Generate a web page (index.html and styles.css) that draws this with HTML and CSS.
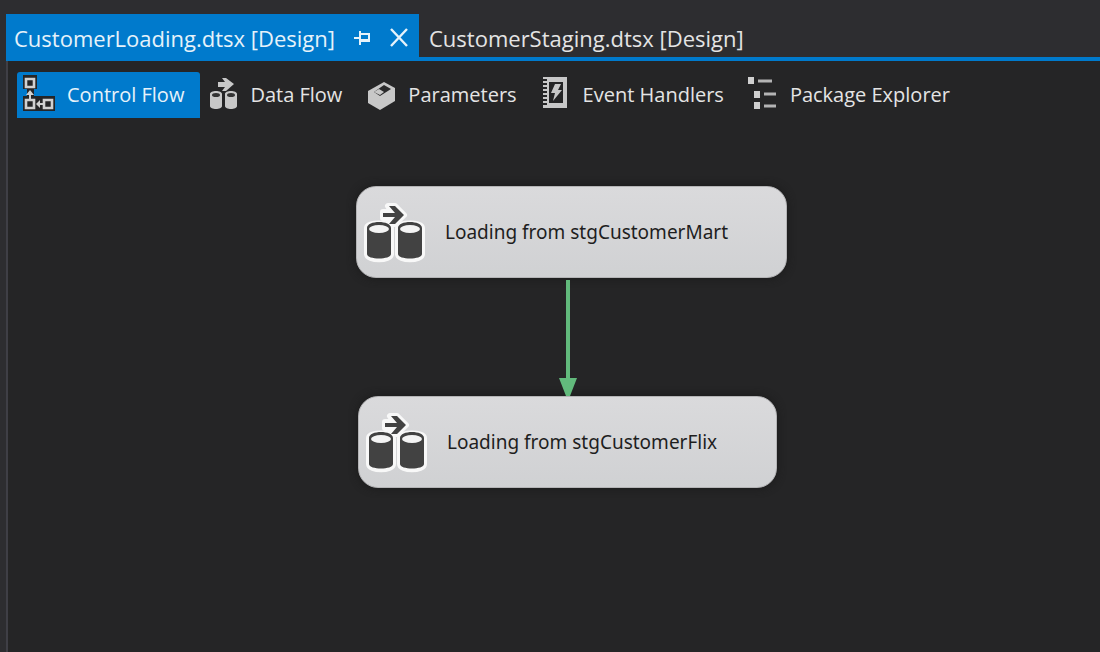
FILE: index.html
```html
<!DOCTYPE html>
<html lang="en">
<head>
<meta charset="utf-8">
<title>CustomerLoading.dtsx [Design]</title>
<link rel="stylesheet" href="styles.css">
</head>
<body>
<svg class="defs" aria-hidden="true">
  <symbol id="task" viewBox="0 0 60 60" overflow="visible">
    <g class="task-halo">
      <path d="M18 10h10l-5-6h7l9 9-9 9h-7l5-6H18z"/>
      <path d="M2 26c0-6 24-6 24 0v26c0 7-24 7-24 0zM33 26c0-6 24-6 24 0v26c0 7-24 7-24 0z"/>
    </g>
    <path class="task-ink" d="M18 11h12l-6-7h6l9 9-9 9h-6l6-7H18z"/>
    <path class="task-ink" d="M2 26c0-8 24-8 24 0v26c0 6-24 6-24 0zM33 26c0-8 24-8 24 0v26c0 6-24 6-24 0z"/>
    <ellipse class="task-top" cx="14" cy="27" rx="10" ry="4"/>
    <ellipse class="task-top" cx="45" cy="27" rx="10" ry="4"/>
  </symbol>
</svg>
<header class="tabs">
  <div class="tab tab-active">
    <button class="tab-label" type="button">CustomerLoading.dtsx [Design]</button>
    <button class="tab-tool" type="button" aria-label="Pin">
      <svg width="18" height="18" viewBox="0 0 18 18"><path d="M1 9h6M7 2v14M7 5h9v7H7" fill="none" stroke="currentColor" stroke-width="2"/><path d="M7 10h10v3H7z" fill="currentColor"/></svg>
    </button>
    <button class="tab-tool" type="button" aria-label="Close">
      <svg width="20" height="20" viewBox="0 0 20 20"><path d="M2 1l16 17M18 1L2 18" fill="none" stroke="currentColor" stroke-width="2.4"/></svg>
    </button>
  </div>
  <div class="tab">
    <button class="tab-label" type="button">CustomerStaging.dtsx [Design]</button>
  </div>
</header>
<main class="designer">
  <nav class="views">
    <button class="view view-active" type="button">
      <svg width="36" height="46" viewBox="0 0 36 46">
        <path d="M1 3h14v14h-3v7h25v15H1V24h4v-7H1z" fill="#252526"/>
        <path d="M4 7h8v8H4zM4 28h8v8H4zM22 28h8v8h-8z" fill="none" stroke="#d0d0d0" stroke-width="2.6"/>
        <path d="M8 18l4 5H9v4H7v-4H4zM14 32l4-4v3h3v2h-3v3z" fill="#d0d0d0"/>
        <path d="M33 24h4v15h-4z" fill="#007acc"/>
      </svg>
      <span>Control Flow</span>
    </button>
    <button class="view" type="button">
      <svg width="36" height="46" viewBox="0 0 36 46">
        <path d="M13 10h7l-3-4h4l8 6-8 7h-4l3-4h-7z" fill="#c8c8c8"/>
        <path d="M5 22c0-4 12-4 12 0v12c0 4-12 4-12 0zM20 22c0-4 12-4 12 0v12c0 4-12 4-12 0z" fill="#c8c8c8"/>
        <ellipse cx="11" cy="23" rx="4" ry="2" fill="#333"/><ellipse cx="26" cy="23" rx="4" ry="2" fill="#333"/>
      </svg>
      <span>Data Flow</span>
    </button>
    <button class="view" type="button">
      <svg width="36" height="46" viewBox="0 0 36 46">
        <path d="M21 10l11 6v13L17 38 5 31V19z" fill="#c8c8c8"/>
        <path d="M21 13l7 4-11 7-6-4z" fill="#2a2a2b"/>
        <path d="M11 20l5-3 5 3-4 3z" fill="#c8c8c8"/>
      </svg>
      <span>Parameters</span>
    </button>
    <button class="view" type="button">
      <svg width="36" height="46" viewBox="0 0 36 46">
        <path d="M5 5h24v31H5z" fill="#c8c8c8"/>
        <path d="M11 10h14v21H11z" fill="#252526"/>
        <path d="M5 8h4M5 12h4M5 16h4M5 20h4M5 24h4M5 28h4M5 32h4" stroke="#252526" stroke-width="2"/>
        <path d="M17 12h6l-3 6h4l-9 11 2-8h-4z" fill="#c8c8c8"/>
      </svg>
      <span>Event Handlers</span>
    </button>
    <button class="view" type="button">
      <svg width="36" height="46" viewBox="0 0 36 46">
        <path d="M3 5h6v7H3zM9 19h6v7H9zM9 30h6v7H9z" fill="#d0d0d0"/>
        <path d="M13 9h14M19 22h12M19 34h12" stroke="#b4b4b4" stroke-width="3"/>
      </svg>
      <span>Package Explorer</span>
    </button>
  </nav>
  <section class="canvas" aria-label="Control Flow">
    <div class="task task-mart">
      <svg class="task-icon" aria-hidden="true"><use href="#task"/></svg>
      <span>Loading from stgCustomerMart</span>
    </div>
    <svg class="link" width="18" height="118" viewBox="0 0 18 118" aria-hidden="true"><path d="M7 0h4v98h7l-7 18H7L0 98h7z" fill="#62ba7c"/></svg>
    <div class="task task-flix">
      <svg class="task-icon" aria-hidden="true"><use href="#task"/></svg>
      <span>Loading from stgCustomerFlix</span>
    </div>
  </section>
</main>
</body>
</html>
```
FILE: styles.css
```css
* {
  box-sizing: border-box;
}

body {
  margin: 0;
  min-height: 100vh;
  display: flex;
  flex-direction: column;
  padding: 14px 0 0 6px;
  background: #2d2d30;
  color: #e4e4e4;
  font-family: "Open Sans", "Noto Sans", sans-serif;
  font-size: 22px;
}

button {
  padding: 0;
  border: 0;
  background: none;
  color: inherit;
  font: inherit;
  white-space: nowrap;
}

svg {
  display: block;
  flex: none;
}

.defs {
  position: absolute;
  width: 0;
  height: 0;
}

.tabs {
  display: flex;
  border-bottom: 4px solid #007acc;
}

.tab {
  display: flex;
  align-items: center;
  gap: 18px;
  height: 43px;
  padding: 4px 10px 0 10px;
}

.tab-active {
  padding: 4px 10px 0 8px;
  background: #007acc;
  color: #e6f2fa;
}

.designer {
  flex: 1;
  display: flex;
  flex-direction: column;
  border-left: 2px solid #3f3f46;
  background: #252526;
}

.views {
  display: flex;
  padding: 11px 0 0 9px;
}

.view {
  display: flex;
  align-items: center;
  gap: 9px;
  height: 46px;
  padding: 0 16px 0 5px;
  font-size: 20px;
}

.view span {
  padding-bottom: 2px;
}

.view-active {
  border-radius: 3px 3px 0 0;
  background: #007acc;
  color: #e6f2fa;
}

.canvas {
  position: relative;
  flex: 1;
}

.task {
  position: absolute;
  display: flex;
  align-items: center;
  gap: 20px;
  height: 92px;
  padding: 0 8px;
  border: 1px solid #b4b4b6;
  border-radius: 20px;
  background: linear-gradient(#dadadc, #d0d1d3);
  box-shadow: 0 0 8px #1a1a1a;
  color: #1e1e1e;
  font-family: "Noto Sans", sans-serif;
  font-size: 19px;
  white-space: nowrap;
}

.task-mart {
  left: 348px;
  top: 68px;
  width: 431px;
}

.task-flix {
  left: 350px;
  top: 278px;
  width: 419px;
}

.link {
  position: absolute;
  z-index: 1;
  left: 551px;
  top: 162px;
}

.task-icon {
  width: 60px;
  height: 60px;
  overflow: visible;
}

.task-halo {
  fill: #f8f8f8;
  stroke: #f8f8f8;
  stroke-width: 6px;
  stroke-linejoin: round;
}

.task-ink {
  fill: #424242;
}

.task-top {
  fill: #f4f4f4;
}
```
